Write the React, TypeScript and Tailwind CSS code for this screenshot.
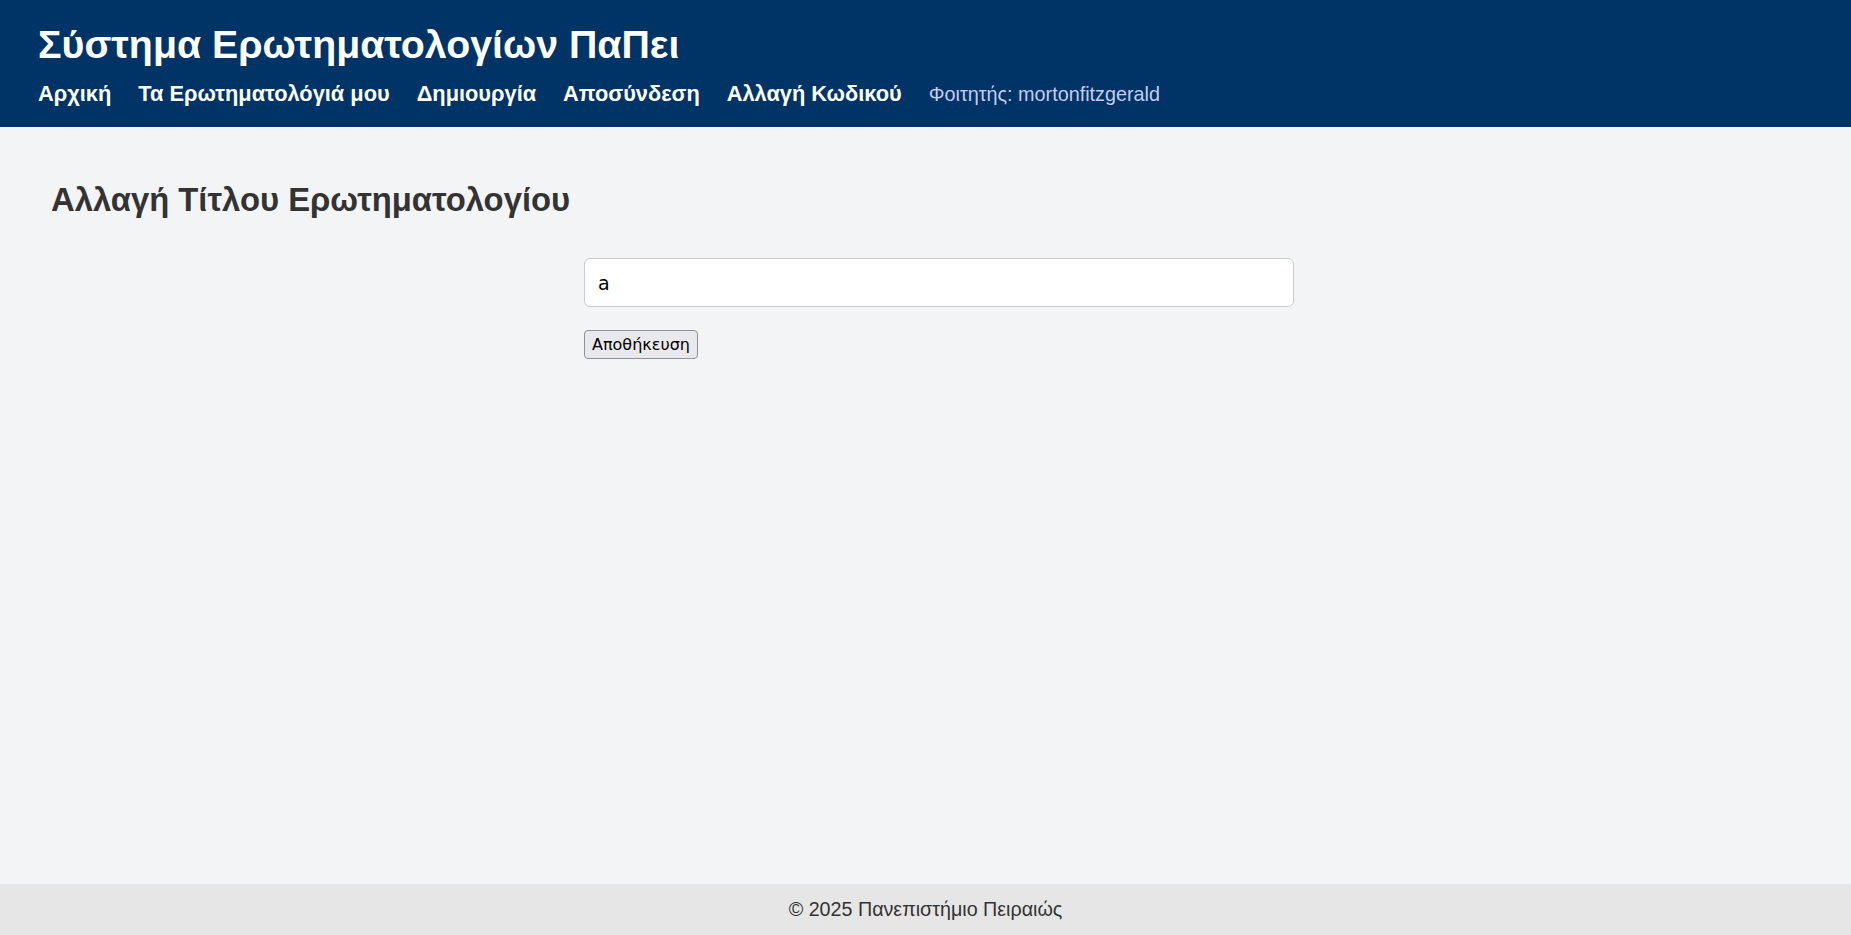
import { useState } from 'react';

const navItems = [
  { label: 'Αρχική', href: '#home' },
  { label: 'Τα Ερωτηματολόγιά μου', href: '#my-surveys' },
  { label: 'Δημιουργία', href: '#create' },
  { label: 'Αποσύνδεση', href: '#logout' },
  { label: 'Αλλαγή Κωδικού', href: '#password' },
];

export default function App() {
  const [title, setTitle] = useState('a');

  return (
    <div className="min-h-screen flex flex-col bg-[#f3f4f6] font-['Liberation_Sans',Arial,sans-serif]">
      {/* Header */}
      <header className="bg-[#003366] text-white px-[38px] pt-[22px] pb-[21px]">
        <h1 className="text-[39.3px] leading-[44px] font-bold">Σύστημα Ερωτηματολογίων ΠαΠει</h1>
        <nav className="mt-[16px] flex items-baseline gap-[27px] text-[21.8px] leading-[24px]">
          {navItems.map((item) => (
            <a key={item.href} href={item.href} className="font-bold text-white no-underline">
              {item.label}
            </a>
          ))}
          <span className="text-[#c5cdf0] font-normal text-[19.8px]">Φοιτητής: mortonfitzgerald</span>
        </nav>
      </header>

      {/* Main */}
      <main className="flex-1 px-[51px] pt-[54px]">
        <h2 className="text-[32.8px] leading-[38px] font-bold text-[#333]">Αλλαγή Τίτλου Ερωτηματολογίου</h2>
        <form className="w-[683px] mx-auto mt-[39px]" onSubmit={(e) => e.preventDefault()}>
          <input
            type="text"
            value={title}
            onChange={(e) => setTitle(e.target.value)}
            className="block w-[710px] h-[49px] px-[13px] bg-white border border-[#ccc] rounded-[6px] text-[19px] text-black font-['DejaVu_Sans',sans-serif] outline-none"
          />
          <button
            type="submit"
            className="mt-[23px] h-[29px] px-[7px] bg-[#e9e9ed] border border-[#8f8f9d] rounded-[4px] text-[16px] text-black font-['DejaVu_Sans',sans-serif]"
          >
            Αποθήκευση
          </button>
        </form>
      </main>

      {/* Footer */}
      <footer className="h-[51px] bg-[#e6e6e6] flex items-center justify-center text-[19.7px] text-[#333]">
        © 2025 Πανεπιστήμιο Πειραιώς
      </footer>
    </div>
  );
}
